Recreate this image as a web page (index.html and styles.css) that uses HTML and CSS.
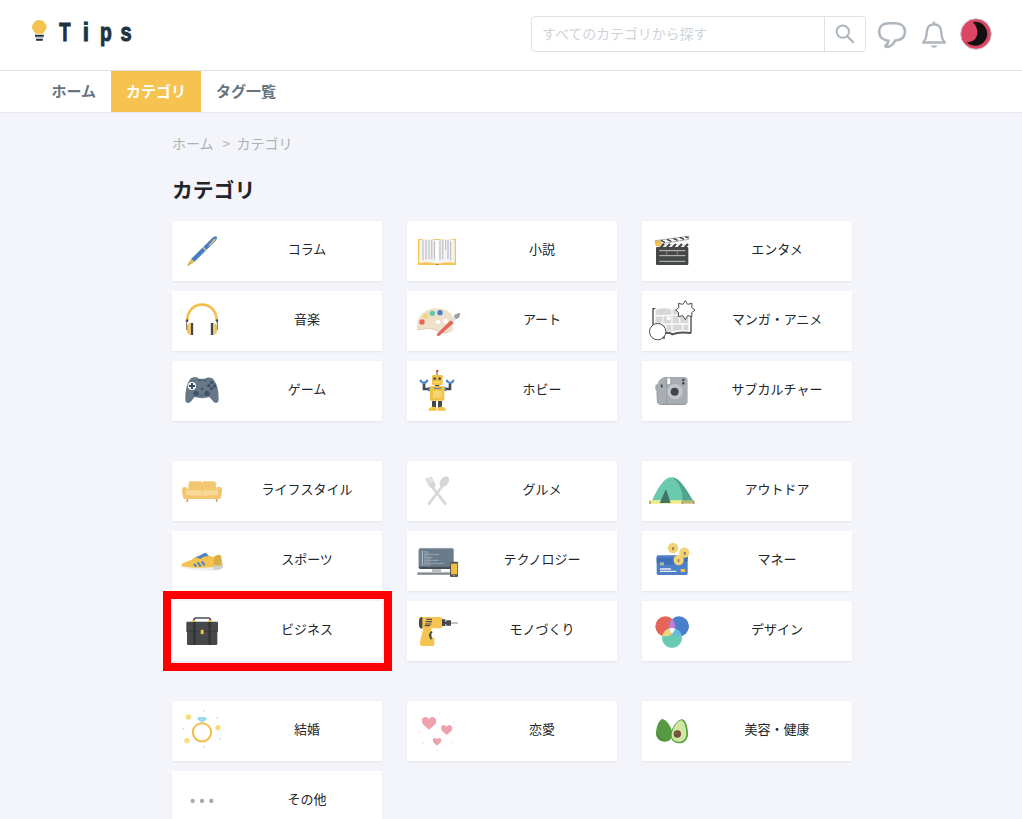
FILE: index.html
```html
<!DOCTYPE html>
<html lang="ja">
<head>
<meta charset="utf-8">
<title>カテゴリ | Tips</title>
<link rel="stylesheet" href="styles.css">
</head>
<body>
<header class="header">
  <a class="logo" aria-label="Tips">
    <svg width="110" height="32" viewBox="0 0 110 32">
      <path d="M3.300 17.700C2.500 15.200.1 14.500.1 11.300a7.200 7.200 0 0 1 14.400 0c0 3.200-2.400 3.900-3.200 6.400z" fill="#f6c350"/>
      <path d="M3 19.800h8.800M4 23.900h6.800" stroke="#22313f" stroke-width="1.900"/><path d="M3.500 22h7.800" stroke="#7b8a97"/>
      <g class="logo-text"><text transform="translate(27.200 24.700) scale(.74 1)">T</text><text transform="translate(50.800 24.700) scale(.9 1)">i</text><text transform="translate(67.900 24.700) scale(.77 1)">p</text><text transform="translate(88.600 24.700) scale(.8 1)">s</text></g>
    </svg>
  </a>
  <div class="tools">
    <div class="search">
      <span class="placeholder">すべてのカテゴリから探す</span>
      <button class="search-button" aria-label="検索"><svg width="20" height="20" viewBox="0 0 20 20" fill="none" stroke="#adb5bd" stroke-width="2"><circle cx="7.800" cy="7.600" r="6.200"/><path d="M12.200 12.200l6.600 6.600" stroke-width="2.300"/></svg></button>
    </div>
    <svg class="chat" width="30" height="28" viewBox="0 0 30 28" fill="none" stroke="#adb5bd" stroke-width="2.500"><path d="M12 2.300h6c6.500 0 10 3.400 10 8.200 0 5.500-3.600 8.700-9.800 9-1.600 3.500-5 6.300-8.700 6.500-1.200 0-1.600-1-.7-1.800 2-1.500 2.700-2.700 2.700-4.500-5.300-.3-9.300-3.500-9.300-9 0-5 3.300-8.400 9.800-8.400z"/></svg>
    <svg class="bell" width="26" height="28" viewBox="0 0 26 28" fill="none" stroke="#adb5bd" stroke-width="2.300"><path d="M13 3.300c-4.800 0-7.100 3.500-7.300 8-.2 5.800-1.100 7.900-3.700 10.200h22c-2.600-2.300-3.500-4.400-3.700-10.200-.2-4.500-2.500-8-7.300-8z" stroke-linejoin="round"/><path d="M13 .5V3"/><path d="M9.800 24.500h6.400c-.5 3-5.900 3-6.400 0z" fill="#adb5bd" stroke="none"/></svg>
    <svg class="avatar" width="32" height="32" viewBox="0 0 32 32"><circle cx="16" cy="16" r="15.300" fill="#dc4563" stroke="#c9c5c8"/><path d="M12.800 4A12 12 0 1 1 6.700 24.200C18 24.500 21 12 12.800 4z" fill="#111"/></svg>
  </div>
</header>
<nav class="nav"><a>ホーム</a><a class="active">カテゴリ</a><a>タグ一覧</a></nav>
<main class="content">
  <div class="breadcrumb"><span>ホーム</span><span class="sep">&gt;</span><span>カテゴリ</span></div>
  <h1>カテゴリ</h1>
  <section class="grid">
    <a class="card">
      <svg class="icon" viewBox="21 18 180 180"><path d="M67 153l5-13 8-10 10 9-11 9z" fill="#e3c057"/><path d="M79 131L144 67q8-6 12-1 1 4-4 11L89 140z" fill="#4d80c8"/><path d="M83 134l64-60" stroke="#356cad" stroke-width="2"/><path d="M113 96l11 11M132 92l18-20" stroke="#efcd6c" stroke-width="4"/><path d="M68 152l8-8" stroke="#786e46" stroke-width="2"/></svg>
      <span>コラム</span></a>
    <a class="card">
      <svg class="icon" viewBox="21 18 180 180"><path d="M54 72h114v78H54z" fill="#f5c555"/><path d="M58 76q27-9 53 0 28-9 53 0v68q-25-6-53 3-26-9-53-3z" fill="#f4f3f1"/><path d="M111 76v67" stroke="#fff" stroke-width="8"/><path d="M69 76v60M87 75v57M103 79v55M120 77v58M137 75v30M152 79v57" stroke="#a9adb1" stroke-width="2.500"/><path d="M78 75v58M95 75v58M128 75v57M144 75v58" stroke="#c8cdd1" stroke-width="5"/><path d="M54 148h114" stroke="#f5c555" stroke-width="4"/><path d="M108 148h7" stroke="#896e48" stroke-width="3"/></svg>
      <span>小説</span></a>
    <a class="card">
      <svg class="icon" viewBox="21 18 180 180"><path d="M61 77l100-13v9L63 89z" fill="#fff" stroke="#555" stroke-width="1.500"/><path d="M77 76l13 6M96 73l13 6M115 70l13 6M134 67l13 6M151 65l9 4" stroke="#3c3f40" stroke-width="4"/><path d="M64 87h96v10H64z" fill="#eee"/><path d="M77 97l10-10M95 97l10-10M113 97l10-10M131 97l10-10M149 97l10-10" stroke="#3c3f40" stroke-width="6"/><rect x="63" y="96" width="97" height="54" rx="3" fill="#454748"/><path d="M73 107h78M73 122h78M73 139h78" stroke="#e0e0e0" stroke-width="2.500"/><path d="M95 108v13M127 108v13" stroke="#999" stroke-width="2"/><path d="M62 78l12-2 7 10-7 8-12-2z" fill="#f4bc42"/><circle cx="69" cy="87" r="2" fill="#fff"/></svg>
      <span>エンタメ</span></a>
    <a class="card">
      <svg class="icon" viewBox="21 228 180 180"><path d="M67 317c0-28 18-48 44-48s44 20 44 48" fill="none" stroke="#f4c04b" stroke-width="8"/><path d="M65 315v30M157 315v30" stroke="#61666a" stroke-width="3"/><circle cx="66" cy="317" r="4" fill="#4b5054"/><circle cx="156" cy="317" r="4" fill="#4b5054"/><path d="M78 323v37c-17 0-17-36 0-37zM144 323v37c17 0 17-36 0-37z" fill="#f4c04b"/><path d="M81 324v36M141 324v36" stroke="#44484b" stroke-width="7"/><path d="M75 325v33M147 325v33" stroke="#e9dcb5" stroke-width="3"/></svg>
      <span>音楽</span></a>
    <a class="card">
      <svg class="icon" viewBox="21 228 180 180"><path d="M52 344c-6-32 17-63 55-64 31-1 54 13 54 38 0 15-7 11-2 22 4 10-13 16-29 14-18-1-24-12-42-12-18-1-30 7-36 2z" fill="#efe0ca"/><path d="M52 343c12 4 25-7 48-1 13 5 18 15 43 11" fill="none" stroke="#e5d1b5" stroke-width="3"/><circle cx="66" cy="321" r="8" fill="#e5645a"/><circle cx="77" cy="304" r="8" fill="#f0d570"/><circle cx="97" cy="295" r="8" fill="#65c8aa"/><circle cx="120" cy="293" r="8" fill="#487fcb"/><ellipse cx="114" cy="321" rx="7" ry="6" fill="#fff"/><ellipse cx="136" cy="318" rx="8" ry="7" fill="#fff"/><path d="M111 363q-2-3 2-8l40-40 8 9-43 38z" fill="#e6655b"/><path d="M151 315l13-12 7 7-10 12z" fill="#dce1e4"/><path d="M162 305c1-11 12-9 19-12-2 9-1 16-12 19z" fill="#9da1a2"/></svg>
      <span>アート</span></a>
    <a class="card">
      <svg class="icon" viewBox="21 228 180 180"><path d="M54 281h114v75h-53l-6 3-6-3H54z" fill="#fff"/><path d="M61 281h-7v74M168 305v50" fill="none" stroke="#484b4c" stroke-width="4"/><path d="M62 284q24-8 48 0 29-7 50 0v63q-28-5-50 4-25-9-48-3z" fill="#d8d8d8"/><path d="M111 281v71M62 303l98-5M62 327h98M85 304l-4 23M131 300l4 25M92 327v20M143 325v23" stroke="#fafafa" stroke-width="4"/><circle cx="101" cy="310" r="6" fill="#fff"/><path d="M90 354q15-2 22 4 20-9 56-4" fill="none" stroke="#505253" stroke-width="6"/><path d="M151 257l7 11 13-3-1 12 10 8-10 8 1 12-13-3-7 12-8-12-13 3 1-12-9-8 10-8-2-12 13 3z" fill="#fff" stroke="#4b4d4e" stroke-width="3"/><circle cx="68" cy="350" r="24.500" fill="#fff" stroke="#4b4d4e" stroke-width="3"/><path d="M80 370l10 1-1-9" fill="#505253"/></svg>
      <span>マンガ・アニメ</span></a>
    <a class="card">
      <svg class="icon" viewBox="21 438 180 180"><path d="M78 490c5-5 19-4 24 1h18c7-6 21-5 26 3 13 17 15 37 15 60 0 11-11 13-18 3l-10-11q-22 7-44 0l-10 12c-7 10-18 6-18-4 0-28 5-52 17-64z" fill="#667787"/><path d="M100 496h9M114 496h9" stroke="#465766" stroke-width="4"/><circle cx="81" cy="513" r="12" fill="#f4f7f8"/><path d="M81 504v18M72 513h18" stroke="#364d63" stroke-width="6"/><g fill="#3f5268"><circle cx="140" cy="503" r="5"/><circle cx="131" cy="512" r="5"/><circle cx="149" cy="513" r="5"/><circle cx="140" cy="521" r="5"/><circle cx="111" cy="522" r="4"/><circle cx="93" cy="535" r="8"/><circle cx="126" cy="535" r="8"/></g><path d="M101 541h17" stroke="#556777" stroke-width="3"/></svg>
      <span>ゲーム</span></a>
    <a class="card">
      <svg class="icon" viewBox="21 438 180 180"><path d="M111 468v14" stroke="#555" stroke-width="3"/><circle cx="112" cy="468" r="4" fill="#df5550"/><path d="M105 512h13" stroke="#484b4d" stroke-width="5"/><rect x="96" y="480" width="32" height="30" rx="4" fill="#f4c147"/><circle cx="104" cy="491" r="4" fill="#4c4d45"/><circle cx="119" cy="491" r="4" fill="#4c4d45"/><path d="M101 502h20" stroke="#f8dc86" stroke-width="4"/><path d="M72 505v17h16M150 505v17h-16" fill="none" stroke="#484b4d" stroke-width="8"/><path d="M61 494q2 9 11 9 9 0 10-9M140 494q2 9 11 9 9 0 9-9" fill="none" stroke="#4985d2" stroke-width="6"/><path d="M87 516v13M136 516v13" stroke="#4780c7" stroke-width="5"/><rect x="90" y="513" width="43" height="44" rx="3" fill="#f4c147"/><path d="M99 528h25v20H99z" fill="#f4d875"/><path d="M101 520h23" stroke="#557caa" stroke-width="3"/><path d="M102 558v20M120 558v20" stroke="#464a4c" stroke-width="12"/><path d="M85 587c0-11 20-16 25-6v6zM138 587c0-11-20-16-25-6v6z" fill="#f4c147"/></svg>
      <span>ホビー</span></a>
    <a class="card">
      <svg class="icon" viewBox="21 438 180 180"><path d="M80 490q5-4 13-4h55q10 0 10 11v62q0 11-12 11H78q-12 0-12-14v-28l-5-4v-14l7-3q2-11 12-17z" fill="#a7adb3"/><path d="M95 487v82" stroke="#959da3" stroke-width="3"/><path d="M68 510q-4 20 0 54" fill="none" stroke="#999fa4" stroke-width="3"/><circle cx="120" cy="530" r="23" fill="#c2c6c9"/><circle cx="119" cy="530" r="12" fill="#414549"/><path d="M101 490v17" stroke="#fff" stroke-width="8"/><g fill="#42484d"><circle cx="145" cy="495" r="4"/><circle cx="145" cy="505" r="4"/><ellipse cx="80" cy="513" rx="3" ry="5"/></g><path d="M81 568h69" stroke="#8d959c" stroke-width="3"/></svg>
      <span>サブカルチャー</span></a>
  </section>
  <section class="grid">
    <a class="card">
      <svg class="icon" viewBox="36 18 180 180"><path d="M80 129h6l-3 12h-4zM167 129h6l-1 12h-4z" fill="#d5a066"/><path d="M84 107l2-24q1-4 7-4h29l4 4 4-4h29q8 0 9 6l2 23z" fill="#f5c973"/><path d="M74 96q8 0 10 9h84q2-10 9-10 10 0 9 12l-3 20q-1 5-6 5H75q-5 0-6-5l-3-19q0-12 8-12z" fill="#f4c46e"/><path d="M78 106h96v14q-48 4-96 0z" fill="#f7d896"/><path d="M126 83v37M94 85v14M105 85v14M116 85v14M135 85v14M146 85v14M157 85v14" stroke="#e8b964" stroke-width="1.500"/></svg>
      <span>ライフスタイル</span></a>
    <a class="card">
      <svg class="icon" viewBox="21 18 180 180"><path d="M87 146l41-54M136 146L95 94" stroke="#d8d8d8" stroke-width="8" stroke-linecap="round"/><ellipse cx="133" cy="80" rx="12" ry="18" transform="rotate(38 133 80)" fill="#d6d7d7"/><path d="M75 71l19-7 12 23q2 10-6 13-8 1-13-6z" fill="#d4d6d7"/><path d="M79 68l13 17M84 65l12 18M89 63l10 18" stroke="#fff" stroke-width="1.500"/></svg>
      <span>グルメ</span></a>
    <a class="card">
      <svg class="icon" viewBox="21 18 180 180"><path d="M51 137c15-34 35-70 58-70s46 39 65 70z" fill="#6bc9ae"/><path d="M111 67c24 1 44 39 63 70h-31c0-31-11-58-32-70z" fill="#4fa58d"/><path d="M43 136h99v10H43z" fill="#f2eb86"/><path d="M142 136h36v10h-36z" fill="#bdb96e"/><path d="M93 102l-19 42h33z" fill="#3e7567"/><path d="M45 137v10M176 137v10M142 137v10" stroke="#9b966c" stroke-width="4"/></svg>
      <span>アウトドア</span></a>
    <a class="card">
      <svg class="icon" viewBox="36 228 180 180"><path d="M64 331q1-6 12-10 18-4 31-15l32-12q5 10 21 12 8 2 19-6l5 4 4 32-65 6-56-5q-6-2-3-6z" fill="#f4c34d"/><path d="M161 306c9-7 15-8 21-5l4 36h-25z" fill="#dbae46"/><path d="M103 306q10 1 20-7 9-6 15-6l8 10q-15 0-25 9-9-5-18-6z" fill="#4d83c9"/><path d="M102 327l7 8M113 322l9 12M125 319l9 12" stroke="#4c82cc" stroke-width="6"/><path d="M65 332c18 6 57 8 97 4v10c-32 2-71-1-96-9z" fill="#eee"/><path d="M162 330c8 3 17 3 27-2 1 12-6 16-14 17l-14 1z" fill="#d0d0d0"/></svg>
      <span>スポーツ</span></a>
    <a class="card">
      <svg class="icon" viewBox="21 228 180 180"><path d="M98 340h24l2 11H95z" fill="#b7bfc5"/><rect x="56" y="280" width="105" height="62" rx="5" fill="#4a4f53"/><path d="M58 282h101v53H58z" fill="#6a7b8b"/><path d="M57 336v-52q0-4 4-4h96q4 0 4 4v40" fill="none" stroke="#b5bec5" stroke-width="2"/><path d="M67 287v45" stroke="#bcc6ce" stroke-width="3"/><path d="M72 290h10M72 294h15M72 298h45M72 303h12M72 307h25M72 312h19M72 316h45M72 321h18M72 325h58M72 330h20" stroke="#a9b8c3" stroke-width="2"/><path d="M52 356h104" stroke="#7c858b" stroke-width="7"/><path d="M54 352h100" stroke="#b7bdc0" stroke-width="2"/><rect x="150" y="320" width="24" height="46" rx="3" fill="#505253"/><path d="M153 326h19v32h-19z" fill="#f5bd3f"/><circle cx="162" cy="362" r="2" fill="#ddd"/></svg>
      <span>テクノロジー</span></a>
    <a class="card">
      <svg class="icon" viewBox="21 228 180 180"><path d="M65 305q0-4 4-4h84q5 0 5 5v49q0 5-5 5H70q-5 0-5-5z" fill="#4d80c8"/><path d="M65 307q36 7 93-5v16q-35 4-61 13L65 324z" fill="#3e71b5"/><path d="M75 322h12v9H75z" fill="#b2b997"/><path d="M75 342h33M75 349h49" stroke="#e7edf3" stroke-width="4"/><path d="M137 342h13v9h-13z" fill="#f4c04b"/><g fill="#f2d477"><circle cx="114" cy="279" r="15.500"/><circle cx="148" cy="293" r="15.500"/><circle cx="131" cy="315" r="15.500"/></g><g class="coins"><text x="114" y="284">¥</text><text x="149" y="299">$</text><text x="131" y="320">£</text></g></svg>
      <span>マネー</span></a>
    <a class="card highlighted">
      <svg class="icon" viewBox="36 438 180 180"><path d="M102 501v-6q0-6 6-6h37q6 0 6 6v6" fill="none" stroke="#494d50" stroke-width="5"/><rect x="79" y="500" width="95" height="31" rx="3" fill="#464849"/><rect x="81" y="528" width="91" height="42" rx="4" fill="#464849"/><path d="M80 529h93" stroke="#35393b" stroke-width="2"/><path d="M103 501v69M149 501v69" stroke="#343738" stroke-width="8"/><path d="M96 501v-4q6-4 12 0v4zM144 501v-4q6-4 12 0v4z" fill="#e6ba50"/><rect x="122" y="524" width="9" height="14" rx="3" fill="#f1bf48"/></svg>
      <span>ビジネス</span></a>
    <a class="card">
      <svg class="icon" viewBox="21 438 180 180"><path d="M68 486h51q8 0 10 9v18q-2 7-9 7H95l-4 16q3 10 12 14v16q0 7-8 7H67q-7 0-7-7l1-11 9-34q-12-3-12-12v-12q0-11 10-11z" fill="#f5c450"/><path d="M67 486v35q-10-1-10-12v-12q0-10 10-11zM126 493h10v20h-10zM139 496h14v16h-14zM136 500h4v8h-4z" fill="#45494b"/><path d="M79 493h17M77 500h19M75 507h19M74 512h16" stroke="#4c4e4d" stroke-width="3.500"/><path d="M153 504h21" stroke="#a3a8ad" stroke-width="4"/><path d="M94 528q-13 10-2 26l4-3q-5-13 2-20z" fill="#484c4d"/></svg>
      <span>モノづくり</span></a>
    <a class="card">
      <svg class="icon" viewBox="21 438 180 180"><defs><clipPath id="red"><circle cx="91" cy="514" r="30"/></clipPath><clipPath id="blue"><circle cx="132" cy="514" r="30"/></clipPath></defs><circle cx="91" cy="514" r="30" fill="#e66559"/><circle cx="132" cy="514" r="30" fill="#4a80ca"/><circle cx="111" cy="549" r="30" fill="#69cbb0"/><g clip-path="url(#red)"><circle cx="132" cy="514" r="30" fill="#c37bd8"/><circle cx="111" cy="549" r="30" fill="#f1d681"/></g><g clip-path="url(#blue)"><circle cx="111" cy="549" r="30" fill="#67bae0"/><g clip-path="url(#red)"><circle cx="111" cy="549" r="30" fill="#fff"/></g></g></svg>
      <span>デザイン</span></a>
  </section>
  <section class="grid">
    <a class="card">
      <svg class="icon" viewBox="21 33 180 180"><circle cx="111" cy="127" r="27.500" fill="none" stroke="#f2bd4b" stroke-width="6"/><path d="M96 87l6-6h18l6 6-12 9h-6z" fill="#86daef"/><path d="M97 87h28M106 82l5 13 5-13" fill="none" stroke="#c4eff8"/><g fill="#f6dc7b"><circle cx="70" cy="81" r="8"/><circle cx="159" cy="113" r="8"/><circle cx="66" cy="152" r="8"/></g><g fill="#b6ecf7"><circle cx="118" cy="62" r="3"/><circle cx="157" cy="84" r="3"/><circle cx="55" cy="116" r="3"/><circle cx="165" cy="148" r="3"/><circle cx="117" cy="172" r="3"/></g></svg>
      <span>結婚</span></a>
    <a class="card">
      <svg class="icon" viewBox="21 33 180 180"><g fill="#eda1aa"><path d="M87 119L68 102q-8-18 8-21 7 0 11 6 4-6 11-6 15 3 9 20z"/><path d="M140 135l-14-13q-8-14 5-17 6 0 9 5 3-5 8-5 13 3 7 17z"/><path d="M111 167l-11-10q-5-11 4-13 5 0 7 4 3-4 8-4 9 3 3 13z"/></g><g fill="#fae4e8"><circle cx="119" cy="69" r="3"/><circle cx="162" cy="96" r="3"/><circle cx="57" cy="125" r="3"/><circle cx="68" cy="159" r="3"/><circle cx="158" cy="156" r="3"/><circle cx="114" cy="181" r="3"/></g></svg>
      <span>恋愛</span></a>
    <a class="card">
      <svg class="icon" viewBox="21 33 180 180"><path d="M82 87c11 0 30 26 30 45 0 16-10 23-23 23-16 0-26-11-26-25 0-18 9-41 19-43z" fill="#579a42"/><path d="M67 132q3 17 24 19" fill="none" stroke="#478b36" stroke-width="4"/><path d="M140 88c12 0 19 24 19 43 0 18-12 29-26 29-17 0-27-12-26-27 1-17 20-45 33-45z" fill="#4f9d41"/><path d="M138 91c10 0 16 23 16 40 0 17-11 24-21 24-14 0-24-8-23-21 1-15 16-43 28-43z" fill="#d1e6a2"/><circle cx="127" cy="132" r="11" fill="#704d3d"/><circle cx="125" cy="129" r="5" fill="#7d5b49"/></svg>
      <span>美容・健康</span></a>
    <a class="card">
      <svg class="icon" viewBox="21 243 180 180"><g fill="#a5aab0"><circle cx="83" cy="333" r="6.500"/><circle cx="111" cy="333" r="6.500"/><circle cx="139" cy="333" r="6.500"/></g></svg>
      <span>その他</span></a>
  </section>
</main>
</body>
</html>
```

FILE: styles.css
```css
*, *::after { box-sizing: border-box; }
body {
  margin: 0;
  height: 819px;
  overflow: hidden;
  background: #f4f5fa;
  color: #212529;
  font-family: "Noto Sans CJK JP", sans-serif;
}
svg { display: block; flex: none; }
.header {
  display: flex;
  justify-content: space-between;
  height: 71px;
  padding: 16px 30px 0 32px;
  background: #fff;
  border-bottom: 1px solid #dee2e6;
}
.logo-text { fill: #22313f; stroke: #22313f; stroke-width: 1px; font: bold 25px "Liberation Sans", sans-serif; }
.tools { display: flex; height: 36px; align-items: center; }
.search {
  display: flex;
  width: 335px;
  height: 36px;
  border: 1px solid #dee2e6;
  border-radius: 4px;
}
.placeholder {
  flex: 1;
  padding-left: 10px;
  font-size: 14px;
  line-height: 32px;
  color: #ced4da;
  letter-spacing: -.1px;
}
.search-button {
  display: flex;
  width: 41px;
  height: 34px;
  padding: 0;
  align-items: center;
  justify-content: center;
  background: transparent;
  border: 0;
  border-left: 1px solid #dee2e6;
}
.chat { margin: 1px 0 0 11px; }
.bell { margin: 1px 0 0 14px; }
.avatar { margin-left: 13px; }
.nav {
  display: flex;
  height: 41px;
  padding-left: 36.5px;
  background: #fff;
  box-shadow: 0 1px 1px #e5e7eb;
  font-size: 15px;
  font-weight: bold;
  line-height: 39px;
  color: #66747f;
}
.nav a { padding: 0 15px; }
.nav .active { background: #f6c350; color: #fff; }
.content { width: 680px; margin-left: 172px; }
.breadcrumb {
  display: flex;
  height: 20px;
  margin-top: 21px;
  font-size: 14px;
  line-height: 20px;
  color: #adb1b5;
}
.breadcrumb .sep { width: 23px; padding-left: 9px; }
h1 { margin: 21px 0 17px; font-size: 20.8px; line-height: 30px; }
.grid {
  display: grid;
  grid-template-columns: repeat(3, 210px);
  grid-auto-rows: 60px;
  gap: 10px 25px;
  margin-bottom: 40px;
}
.card {
  display: flex;
  position: relative;
  background: #fff;
  box-shadow: 0 1px 2px rgba(0, 0, 0, .07);
}
.icon { width: 60px; height: 60px; }
.card span { flex: 1; text-align: center; font-size: 13px; line-height: 55px; }
.coins { fill: #625b48; font: bold 13px "Liberation Sans", sans-serif; text-anchor: middle; }
.highlighted::after {
  content: "";
  position: absolute;
  top: -10px;
  left: -9px;
  width: 229px;
  height: 80px;
  border: 8px solid #f00;
}
```
